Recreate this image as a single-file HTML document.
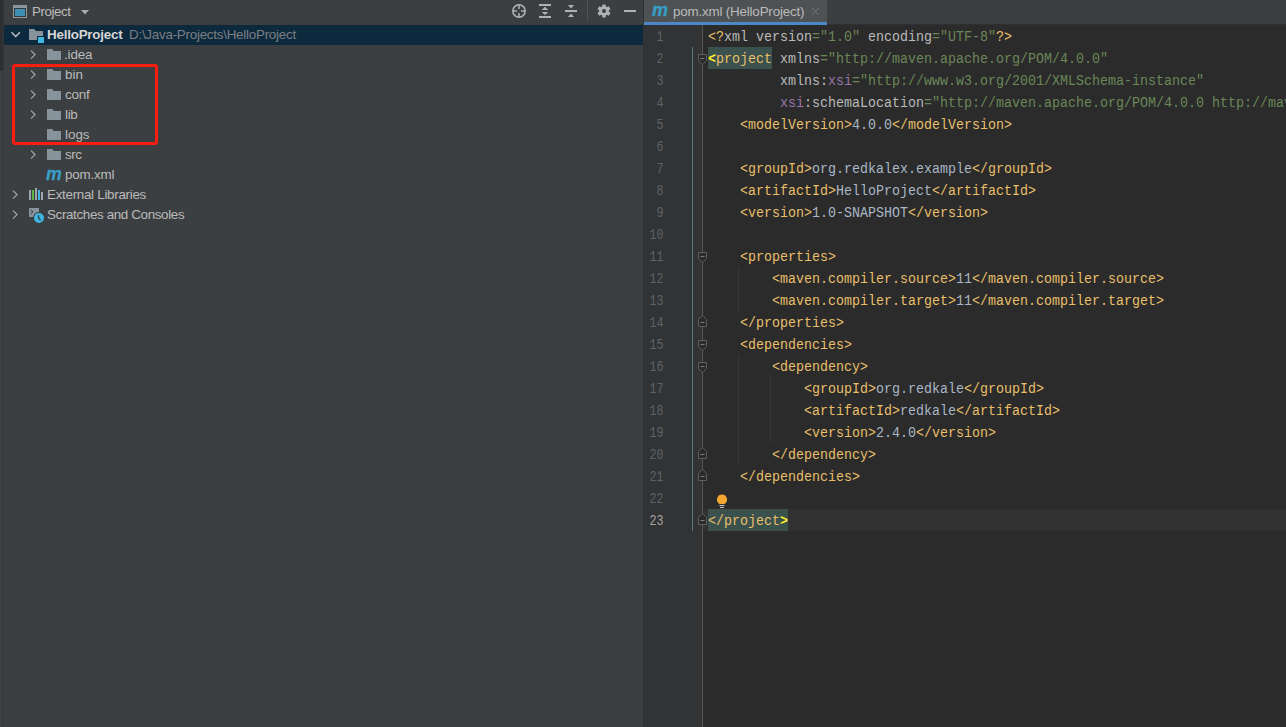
<!DOCTYPE html>
<html lang="en">
<head>
<meta charset="utf-8">
<title>pom.xml - HelloProject</title>
<style>
html,body{margin:0;padding:0;overflow:hidden;}
body{width:1286px;height:727px;overflow:hidden;background:#3c3f41;position:relative;font-family:"Liberation Sans",sans-serif;font-size:13px;color:#bbbbbb;}
.ab{position:absolute;display:block;}
#strip{left:0;top:0;width:3px;height:71px;background:#2d2f31;}
#strip2{left:3px;top:0;width:1px;height:727px;background:#333536;}
#sel{left:4px;top:25px;width:639px;height:20px;background:#0d293e;}
.tx{position:absolute;height:20px;line-height:19px;white-space:nowrap;font-size:13.4px;color:#bbbbbb;}
.tx span{display:inline-block;transform-origin:0 50%;}
#hdr{left:32px;top:2px;height:20px;line-height:20px;font-size:13.4px;color:#bbbbbb;letter-spacing:-0.45px;}
#redbox{left:12px;top:64px;width:140px;height:75px;border:3px solid #fb1d0f;border-radius:3px;}
/* editor */
#tabbar{left:644px;top:0;width:642px;height:24px;background:#3c3f41;border-bottom:1px solid #2f3032;}
#tab{left:644px;top:0;width:183px;height:22px;background:#4e5254;}
#tabline{left:644px;top:22px;width:183px;height:3px;background:#4a88c7;}
#tabtx{left:673px;top:2px;height:20px;line-height:20px;font-size:13.4px;color:#bbbbbb;white-space:nowrap;letter-spacing:-0.19px;}
#editor{left:703px;top:25px;width:583px;height:702px;background:#2b2b2b;overflow:hidden;}
#gutter{left:644px;top:25px;width:58px;height:702px;background:#313335;}
#gline{left:702px;top:25px;width:1px;height:702px;background:#555555;}
#scope{left:692px;top:47px;width:1px;height:484px;background:#567a73;}
.num{position:absolute;left:644px;width:19.5px;height:22px;line-height:24px;transform:scale(0.88,1.1);transform-origin:100% 6px;text-align:right;font-family:"Liberation Mono",monospace;font-size:13.33px;color:#606366;}
.numcur{color:#a4a3a3;}
.ln{position:absolute;left:708px;height:22px;line-height:22px;white-space:pre;transform:scaleY(1.13);transform-origin:0 6px;font-family:"Liberation Mono",monospace;font-size:13.33px;color:#a9b7c6;}
.ln span{display:inline-block;height:22px;vertical-align:top;padding-top:1px;box-sizing:border-box;line-height:22px;}
.t{color:#e8bf6a;}
.a{color:#bababa;}
.v{color:#6a8759;}
.n{color:#9876aa;}
.x{color:#a9b7c6;}
.m{color:#e8bf6a;}
.mb{color:#ffef28;font-weight:bold;}
#curline{left:703px;top:509px;width:583px;height:22px;background:#323232;}
.guide{position:absolute;width:1px;background:#373737;}
.fold{position:absolute;display:block;}
</style>
</head>
<body>
<div class="ab" id="strip"></div>
<div class="ab" id="strip2"></div>
<div class="ab" id="sel"></div>
<div class="ab" style="left:4px;top:24px;width:640px;height:1px;background:#3d3c3b"></div>

<!-- header -->
<svg class="ab" style="left:13px;top:5px" width="14" height="13" viewBox="0 0 14 13"><rect x="0" y="0" width="14" height="13" fill="#8e9aa2"/><rect x="1" y="1" width="12" height="1" fill="#86929a"/><rect x="1" y="3" width="12" height="9" fill="#35383a"/><rect x="2" y="4" width="10" height="7" fill="#3f8fb2"/></svg>
<div class="ab" id="hdr">Project</div>
<svg class="ab" style="left:80px;top:9px" width="10" height="6" viewBox="0 0 10 6"><path d="M1 1 H9 L5 5.5 Z" fill="#a7aaac"/></svg>

<!-- toolbar icons -->
<svg class="ab" style="left:511px;top:3px" width="16" height="16" viewBox="0 0 16 16"><circle cx="8" cy="8" r="6.2" fill="none" stroke="#afb1b3" stroke-width="1.5"/><path d="M8 1.5 V6 M8 10 V14.5 M1.5 8 H6 M10 8 H14.5" stroke="#afb1b3" stroke-width="1.5"/></svg>
<svg class="ab" style="left:537px;top:3px" width="16" height="16" viewBox="0 0 16 16"><path d="M2 1 H14 V3 H2 Z M2 13 H14 V15 H2 Z M8 3.7 L11.3 7 H4.7 Z M8 12.1 L11.3 8.9 H4.7 Z" fill="#afb1b3"/></svg>
<svg class="ab" style="left:563px;top:3px" width="16" height="16" viewBox="0 0 16 16"><path d="M2 7 H14 V9 H2 Z M8 5.5 L11 2 H5 Z M8 10.5 L11 14 H5 Z" fill="#afb1b3"/></svg>
<div class="ab" style="left:587px;top:1px;width:1px;height:20px;background:#515355"></div>
<svg class="ab" style="left:596px;top:3px" width="16" height="16" viewBox="0 0 16 16"><g fill="#afb1b3"><circle cx="8" cy="8" r="4.9"/><g><rect x="6.3" y="1.4" width="3.4" height="13.2" rx=".6"/><rect x="6.3" y="1.4" width="3.4" height="13.2" rx=".6" transform="rotate(60 8 8)"/><rect x="6.3" y="1.4" width="3.4" height="13.2" rx=".6" transform="rotate(120 8 8)"/></g></g><circle cx="8" cy="8" r="2" fill="#3c3f41"/></svg>
<div class="ab" style="left:624px;top:10px;width:12px;height:2px;background:#afb1b3"></div>

<!-- root row -->
<svg class="ab" style="left:10px;top:31px" width="12" height="8" viewBox="0 0 12 8"><path d="M1.5 1.3 L5.7 5.5 L9.9 1.3" fill="none" stroke="#c4c7c9" stroke-width="1.3"/></svg>
<svg class="ab" style="left:29px;top:29px" width="16" height="15" viewBox="0 0 16 15"><path d="M0 0 H5 L7 2 H14 V7 H8 V11 H0 Z" fill="#87939a"/><rect x="9" y="8" width="6" height="6" fill="#40b6e0"/></svg>
<div class="tx" style="left:47px;top:25px;font-weight:bold;color:#d6d6d6;letter-spacing:-0.22px">HelloProject</div>
<div class="tx" style="left:129px;top:25px;color:#7c7f82;letter-spacing:-0.25px">D:\Java-Projects\HelloProject</div>

<svg class="ab" style="left:29px;top:49px" width="8" height="12" viewBox="0 0 8 12"><path d="M2 1.6 L6 5.6 L2 9.6" fill="none" stroke="#a0a4a6" stroke-width="1.3"/></svg>
<svg class="ab" style="left:47px;top:49px" width="14" height="11" viewBox="0 0 14 11"><path d="M0 0 H5 L7 2 H14 V11 H0 Z" fill="#87939a"/></svg>
<div class="tx" style="left:64px;top:45px;letter-spacing:-0.12px">.idea</div>
<svg class="ab" style="left:29px;top:69px" width="8" height="12" viewBox="0 0 8 12"><path d="M2 1.6 L6 5.6 L2 9.6" fill="none" stroke="#a0a4a6" stroke-width="1.3"/></svg>
<svg class="ab" style="left:47px;top:69px" width="14" height="11" viewBox="0 0 14 11"><path d="M0 0 H5 L7 2 H14 V11 H0 Z" fill="#87939a"/></svg>
<div class="tx" style="left:65px;top:65px;letter-spacing:0px">bin</div>
<svg class="ab" style="left:29px;top:89px" width="8" height="12" viewBox="0 0 8 12"><path d="M2 1.6 L6 5.6 L2 9.6" fill="none" stroke="#a0a4a6" stroke-width="1.3"/></svg>
<svg class="ab" style="left:47px;top:89px" width="14" height="11" viewBox="0 0 14 11"><path d="M0 0 H5 L7 2 H14 V11 H0 Z" fill="#87939a"/></svg>
<div class="tx" style="left:65px;top:85px;letter-spacing:-0.2px">conf</div>
<svg class="ab" style="left:29px;top:109px" width="8" height="12" viewBox="0 0 8 12"><path d="M2 1.6 L6 5.6 L2 9.6" fill="none" stroke="#a0a4a6" stroke-width="1.3"/></svg>
<svg class="ab" style="left:47px;top:109px" width="14" height="11" viewBox="0 0 14 11"><path d="M0 0 H5 L7 2 H14 V11 H0 Z" fill="#87939a"/></svg>
<div class="tx" style="left:65px;top:105px;letter-spacing:-0.3px">lib</div>
<svg class="ab" style="left:47px;top:129px" width="14" height="11" viewBox="0 0 14 11"><path d="M0 0 H5 L7 2 H14 V11 H0 Z" fill="#87939a"/></svg>
<div class="tx" style="left:65px;top:125px;letter-spacing:0px">logs</div>
<svg class="ab" style="left:29px;top:149px" width="8" height="12" viewBox="0 0 8 12"><path d="M2 1.6 L6 5.6 L2 9.6" fill="none" stroke="#a0a4a6" stroke-width="1.3"/></svg>
<svg class="ab" style="left:47px;top:149px" width="14" height="11" viewBox="0 0 14 11"><path d="M0 0 H5 L7 2 H14 V11 H0 Z" fill="#87939a"/></svg>
<div class="tx" style="left:65px;top:145px;letter-spacing:-0.5px">src</div>

<!-- pom.xml -->
<div class="ab" style="left:46px;top:164px;width:18px;height:20px;line-height:20px;font-size:19px;font-weight:bold;font-style:italic;color:#379dc4;-webkit-text-stroke:0.4px #379dc4;transform:scaleX(0.93);transform-origin:0 50%">m</div>
<div class="tx" style="left:65px;top:165px;letter-spacing:-0.2px">pom.xml</div>

<!-- External Libraries -->
<svg class="ab" style="left:11px;top:189px" width="8" height="12" viewBox="0 0 8 12"><path d="M2 1.6 L6 5.6 L2 9.6" fill="none" stroke="#a0a4a6" stroke-width="1.3"/></svg>
<svg class="ab" style="left:29px;top:188px" width="15" height="12" viewBox="0 0 15 12"><rect x="0" y="2" width="2" height="10" fill="#9aa7b0"/><rect x="3" y="2" width="2" height="10" fill="#62b543"/><rect x="6" y="0" width="2" height="12" fill="#9aa7b0"/><rect x="9" y="2" width="2" height="10" fill="#40b6e0"/><rect x="12" y="4" width="2" height="8" fill="#9aa7b0"/></svg>
<div class="tx" style="left:47px;top:185px;letter-spacing:-0.29px">External Libraries</div>

<!-- Scratches -->
<svg class="ab" style="left:11px;top:209px" width="8" height="12" viewBox="0 0 8 12"><path d="M2 1.6 L6 5.6 L2 9.6" fill="none" stroke="#a0a4a6" stroke-width="1.3"/></svg>
<svg class="ab" style="left:29px;top:208px" width="16" height="16" viewBox="0 0 16 16"><rect x="0" y="0" width="10" height="9" fill="#87939a"/><path d="M1.5 1.8 L4 3.8 L1.5 5.8" fill="none" stroke="#3c3f41" stroke-width="1"/><circle cx="10" cy="10" r="6" fill="#3c3f41"/><circle cx="10" cy="10" r="5" fill="#40b6e0"/><path d="M9.6 7.3 V10.3 L11.6 12.2" fill="none" stroke="#2b4a5a" stroke-width="1.4"/></svg>
<div class="tx" style="left:47px;top:205px;letter-spacing:-0.36px">Scratches and Consoles</div>

<div class="ab" id="redbox"></div>

<!-- editor -->
<div class="ab" style="left:643px;top:0;width:1px;height:727px;background:#313335"></div>
<div class="ab" id="tabbar"></div>
<div class="ab" id="tab"></div>
<div class="ab" id="tabline"></div>
<div class="ab" style="left:652px;top:0px;width:18px;height:20px;line-height:20px;font-size:18px;font-weight:bold;font-style:italic;color:#379dc4;-webkit-text-stroke:0.4px #379dc4;">m</div>
<div class="ab" id="tabtx">pom.xml (HelloProject)</div>
<svg class="ab" style="left:811px;top:7px" width="9" height="9" viewBox="0 0 9 9"><path d="M1 1 L8 8 M8 1 L1 8" stroke="#73777a" stroke-width="1"/></svg>

<div class="ab" id="gutter"></div>
<div class="ab" id="gline"></div>
<div class="ab" id="editor"></div>
<div class="ab" id="curline"></div>
<div class="ab" id="scope"></div>
<div class="ab" style="left:708px;top:47px;width:64px;height:22px;background:#3b514d"></div>
<div class="ab" style="left:708px;top:509px;width:80px;height:22px;background:#3b514d"></div>
<div class="guide" style="left:738px;top:267px;height:44px"></div>
<div class="guide" style="left:738px;top:355px;height:110px"></div>
<div class="guide" style="left:770px;top:377px;height:66px"></div>
<div class="num" style="top:25px">1</div>
<div class="num" style="top:47px">2</div>
<div class="num" style="top:69px">3</div>
<div class="num" style="top:91px">4</div>
<div class="num" style="top:113px">5</div>
<div class="num" style="top:135px">6</div>
<div class="num" style="top:157px">7</div>
<div class="num" style="top:179px">8</div>
<div class="num" style="top:201px">9</div>
<div class="num" style="top:223px">10</div>
<div class="num" style="top:245px">11</div>
<div class="num" style="top:267px">12</div>
<div class="num" style="top:289px">13</div>
<div class="num" style="top:311px">14</div>
<div class="num" style="top:333px">15</div>
<div class="num" style="top:355px">16</div>
<div class="num" style="top:377px">17</div>
<div class="num" style="top:399px">18</div>
<div class="num" style="top:421px">19</div>
<div class="num" style="top:443px">20</div>
<div class="num" style="top:465px">21</div>
<div class="num" style="top:487px">22</div>
<div class="num numcur" style="top:509px">23</div>
<svg class="fold" style="left:697px;top:50px" width="11" height="16" viewBox="0 0 11 16"><path d="M1.5 4.5 H9.5 V10.5 L5.5 14.8 L1.5 10.5 Z" fill="#2b2b2b" stroke="#5e5e5e" stroke-width="1"/><path d="M3.5 8.5 H7.5" stroke="#7a7a7a" stroke-width="1"/></svg>
<svg class="fold" style="left:697px;top:248px" width="11" height="16" viewBox="0 0 11 16"><path d="M1.5 4.5 H9.5 V10.5 L5.5 14.8 L1.5 10.5 Z" fill="#2b2b2b" stroke="#5e5e5e" stroke-width="1"/><path d="M3.5 8.5 H7.5" stroke="#7a7a7a" stroke-width="1"/></svg>
<svg class="fold" style="left:697px;top:314px" width="11" height="16" viewBox="0 0 11 16"><path d="M1.5 12.5 H9.5 V5.5 L5.5 1.3 L1.5 5.5 Z" fill="#2b2b2b" stroke="#5e5e5e" stroke-width="1"/><path d="M3.5 8.5 H7.5" stroke="#7a7a7a" stroke-width="1"/></svg>
<svg class="fold" style="left:697px;top:336px" width="11" height="16" viewBox="0 0 11 16"><path d="M1.5 4.5 H9.5 V10.5 L5.5 14.8 L1.5 10.5 Z" fill="#2b2b2b" stroke="#5e5e5e" stroke-width="1"/><path d="M3.5 8.5 H7.5" stroke="#7a7a7a" stroke-width="1"/></svg>
<svg class="fold" style="left:697px;top:358px" width="11" height="16" viewBox="0 0 11 16"><path d="M1.5 4.5 H9.5 V10.5 L5.5 14.8 L1.5 10.5 Z" fill="#2b2b2b" stroke="#5e5e5e" stroke-width="1"/><path d="M3.5 8.5 H7.5" stroke="#7a7a7a" stroke-width="1"/></svg>
<svg class="fold" style="left:697px;top:446px" width="11" height="16" viewBox="0 0 11 16"><path d="M1.5 12.5 H9.5 V5.5 L5.5 1.3 L1.5 5.5 Z" fill="#2b2b2b" stroke="#5e5e5e" stroke-width="1"/><path d="M3.5 8.5 H7.5" stroke="#7a7a7a" stroke-width="1"/></svg>
<svg class="fold" style="left:697px;top:468px" width="11" height="16" viewBox="0 0 11 16"><path d="M1.5 12.5 H9.5 V5.5 L5.5 1.3 L1.5 5.5 Z" fill="#2b2b2b" stroke="#5e5e5e" stroke-width="1"/><path d="M3.5 8.5 H7.5" stroke="#7a7a7a" stroke-width="1"/></svg>
<svg class="fold" style="left:697px;top:512px" width="11" height="16" viewBox="0 0 11 16"><path d="M1.5 12.5 H9.5 V5.5 L5.5 1.3 L1.5 5.5 Z" fill="#2b2b2b" stroke="#5e5e5e" stroke-width="1"/><path d="M3.5 8.5 H7.5" stroke="#7a7a7a" stroke-width="1"/></svg>
<div class="ln" style="top:25px"><span class="t">&lt;?</span><span class="a">xml version</span><span class="v">="1.0"</span><span class="a"> encoding</span><span class="v">="UTF-8"</span><span class="t">?&gt;</span></div>
<div class="ln" style="top:47px"><span class="mb">&lt;</span><span class="m">project</span><span class="a"> xmlns</span><span class="v">="http://maven.apache.org/POM/4.0.0"</span></div>
<div class="ln" style="top:69px"><span class="a">         xmlns:</span><span class="n">xsi</span><span class="v">="http://www.w3.org/2001/XMLSchema-instance"</span></div>
<div class="ln" style="top:91px"><span class="x">         </span><span class="n">xsi</span><span class="a">:schemaLocation</span><span class="v">="http://maven.apache.org/POM/4.0.0 http://maven.apache.org/xsd/maven-4.0.0.xsd"</span><span class="t">&gt;</span></div>
<div class="ln" style="top:113px"><span class="x">    </span><span class="t">&lt;modelVersion&gt;</span><span class="x">4.0.0</span><span class="t">&lt;/modelVersion&gt;</span></div>
<div class="ln" style="top:135px"></div>
<div class="ln" style="top:157px"><span class="x">    </span><span class="t">&lt;groupId&gt;</span><span class="x">org.redkalex.example</span><span class="t">&lt;/groupId&gt;</span></div>
<div class="ln" style="top:179px"><span class="x">    </span><span class="t">&lt;artifactId&gt;</span><span class="x">HelloProject</span><span class="t">&lt;/artifactId&gt;</span></div>
<div class="ln" style="top:201px"><span class="x">    </span><span class="t">&lt;version&gt;</span><span class="x">1.0-SNAPSHOT</span><span class="t">&lt;/version&gt;</span></div>
<div class="ln" style="top:223px"></div>
<div class="ln" style="top:245px"><span class="x">    </span><span class="t">&lt;properties&gt;</span></div>
<div class="ln" style="top:267px"><span class="x">        </span><span class="t">&lt;maven.compiler.source&gt;</span><span class="x">11</span><span class="t">&lt;/maven.compiler.source&gt;</span></div>
<div class="ln" style="top:289px"><span class="x">        </span><span class="t">&lt;maven.compiler.target&gt;</span><span class="x">11</span><span class="t">&lt;/maven.compiler.target&gt;</span></div>
<div class="ln" style="top:311px"><span class="x">    </span><span class="t">&lt;/properties&gt;</span></div>
<div class="ln" style="top:333px"><span class="x">    </span><span class="t">&lt;dependencies&gt;</span></div>
<div class="ln" style="top:355px"><span class="x">        </span><span class="t">&lt;dependency&gt;</span></div>
<div class="ln" style="top:377px"><span class="x">            </span><span class="t">&lt;groupId&gt;</span><span class="x">org.redkale</span><span class="t">&lt;/groupId&gt;</span></div>
<div class="ln" style="top:399px"><span class="x">            </span><span class="t">&lt;artifactId&gt;</span><span class="x">redkale</span><span class="t">&lt;/artifactId&gt;</span></div>
<div class="ln" style="top:421px"><span class="x">            </span><span class="t">&lt;version&gt;</span><span class="x">2.4.0</span><span class="t">&lt;/version&gt;</span></div>
<div class="ln" style="top:443px"><span class="x">        </span><span class="t">&lt;/dependency&gt;</span></div>
<div class="ln" style="top:465px"><span class="x">    </span><span class="t">&lt;/dependencies&gt;</span></div>
<div class="ln" style="top:487px"></div>
<div class="ln cur" style="top:509px"><span class="m">&lt;/project</span><span class="mb">&gt;</span></div>

<!-- bulb -->
<svg class="ab" style="left:715px;top:493px" width="14" height="16" viewBox="0 0 14 16"><path d="M7 1.5 A5 5 0 0 1 10 10.5 V11 H4 V10.5 A5 5 0 0 1 7 1.5 Z" fill="#f2a630"/><rect x="4.5" y="12" width="5" height="1" fill="#c8c8c8"/><rect x="5" y="14" width="4" height="1" fill="#c8c8c8"/></svg>
</body>
</html>
